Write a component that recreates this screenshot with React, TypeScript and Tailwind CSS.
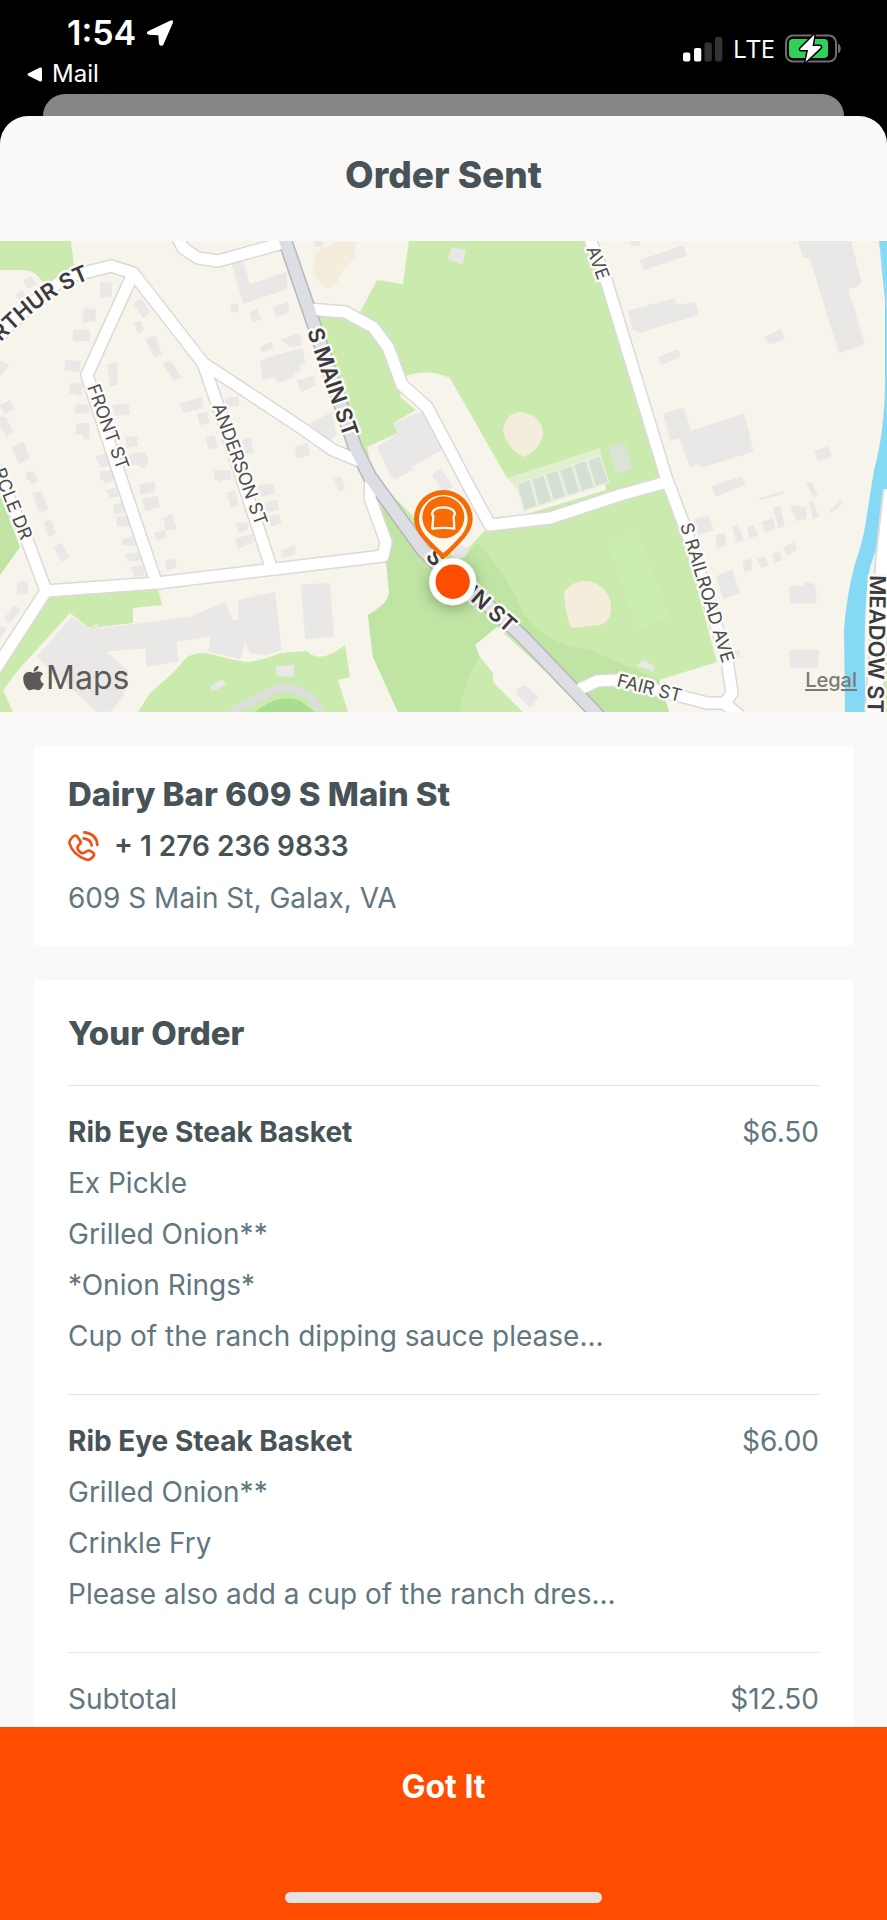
import React from "react";
import { FaApple } from "react-icons/fa";

type OrderItem = { name: string; price: string; notes: string[] };

const items: OrderItem[] = [
  {
    name: "Rib Eye Steak Basket",
    price: "$6.50",
    notes: [
      "Ex Pickle",
      "Grilled Onion**",
      "*Onion Rings*",
      "Cup of the ranch dipping sauce please...",
    ],
  },
  {
    name: "Rib Eye Steak Basket",
    price: "$6.00",
    notes: ["Grilled Onion**", "Crinkle Fry", "Please also add a cup of the ranch dres..."],
  },
];

function StatusBar() {
  return (
    <div className="flex h-[94px] items-start justify-between bg-black pl-[27px] pr-[45px] text-white">
      <div>
        <div className="flex h-[52px] items-end gap-[10px] pl-10">
          <span className="text-[34px] leading-[38px] font-semibold">1:54</span>
          <svg className="mb-[5px] h-7 w-7" viewBox="440 57 84 84" aria-hidden="true">
            <path
              d="M446 94 L512 62 Q524 58 520 70 L492 134 Q484 142 479 132 L477 106 L449 104 Q438 100 446 94Z"
              fill="#fff"
            />
          </svg>
        </div>
        <a href="#mail" className="mt-[6px] flex h-8 items-center gap-[10px] text-2xl">
          <svg className="h-[15px] w-[15px]" viewBox="0 0 15 15" aria-hidden="true">
            <path d="M1 6.5 L13 .6 Q15 0 15 2 V13 Q15 15 13 14.4 L1 8.5 Q0 7.5 1 6.5Z" fill="#fff" />
          </svg>
          Mail
        </a>
      </div>
      <div className="mt-[33px] flex h-[31px] items-center gap-[10px]">
        <svg className="h-[26px] w-10" viewBox="0 0 40 26" aria-hidden="true">
          <rect x="0" y="16.500" width="7.300" height="9" rx="2" fill="#fff" />
          <rect x="11" y="12" width="7.300" height="13.500" rx="2" fill="#fff" />
          <rect x="21.500" y="6.500" width="7.300" height="19" rx="2" fill="#333" />
          <rect x="32" y="1" width="7.300" height="24.500" rx="2" fill="#333" />
        </svg>
        <span className="font-['Open_Sans',sans-serif] text-[26px] leading-[31px]">LTE</span>
        <svg className="h-[29px] w-[57px]" viewBox="0 0 57 29" aria-hidden="true">
          <rect x="1" y="1.500" width="50" height="26" rx="7" fill="none" stroke="#6f6f71" strokeWidth="2" />
          <path d="M53.500 10 Q57 14.500 53.500 19Z" fill="#6f6f71" stroke="#6f6f71" />
          <rect x="4" y="5" width="39" height="19" rx="4" fill="#30d158" />
          <path
            d="M29.500 .5 L15.500 14.500 Q14.500 16 16.500 16 L23 16 L20.500 28 L35.500 13.800 Q36.500 12 34.500 12 L27.500 12Z"
            fill="#fff"
            stroke="#000"
            strokeWidth="3"
            paintOrder="stroke"
            strokeLinejoin="round"
          />
        </svg>
      </div>
    </div>
  );
}

const ROADS = [
  "M-20 362 L0 336 Q45 287 72 276 L111 266 L133 273 L203 363 L300 427 L333 450 L362 462",
  "M132 276 L87 375 L118 470 L156 582",
  "M203 363 L220 412 L271 567",
  "M177 236 L183 248 L198 258 L218 261 L283 243",
  "M46 591 L157 583 L300 566 L383 556 L386 542 L370 498 L371 475",
  "M-4 468 L27 540 L46 591 L0 662 L-6 671",
  "M308 309 L345 312 L373 327 L388 347 L402 385 L427 407 L443 437 L467 483 L490 525 L550 518 L620 495 L667 482",
  "M588 234 L607 283 L666 477 L687 533 L727 660 L732 693 L725 703",
  "M578 690 L597 681 L617 680 L684 697 L707 703 L724 703 L740 716",
];

function Roads({ color, width }: { color: string; width: number }) {
  return (
    <g fill="none" stroke={color} strokeWidth={width} strokeLinejoin="round" strokeLinecap="butt">
      {ROADS.map((d) => (
        <path key={d} d={d} />
      ))}
    </g>
  );
}

const MAIN_ST = "M282 232 L310 313 L355 447 L370 477 L423 550 L443 570 L490 607 L523 637 L592 709 L600 718";

function Buildings() {
  return (
    <g fill="#eae8e6">
      <g transform="translate(0 230) scale(.33333)">
        <path d="M300 157h35v45h-35zM252 234l36 4-2 35-38 5zM220 300h50v34h-52zM195 390l46 2v34l-48-4zM210 458l38 4-4 36-36-8zM320 405l32-10v72h-22zM400 220l22-15 30 40-24 20zM400 278l22-6 10 30-18 10zM436 328l30-12 20 55-24 12zM487 402l24-12 34 50-22 14zM228 522l38 2v28l-40-2zM228 580h40v48h-20v-14h-22zM336 526l50-6 4 32-44 6zM376 622l34-4 4 30-32 6zM286 678l40-10 4 40-30 4zM388 672l50-6 8 34-16 16-14-10-30-2zM300 722h40v28h-40zM535 522l70-22 6 34-56 14zM590 552l30-8 10 36-30 6zM674 505l40-6 4 28-40 4zM614 622l30-6 10 36-28 6zM726 630l26-8 10 48-26 2zM642 722h50v28h-50zM693 95h38l18 68 110-38 4 52-134 45zM688 226l24-8 6 24-22 6zM748 246l24-10 12 32-28 10zM820 232l44-18 4 34-40 12zM780 350l34-14 6 18-34 14zM842 328l58-18v38l-34 2zM780 395l20-12 100-28v70l-20 4-4 16-40 12-12-16-36 8zM0 390l28 15-28 36zM0 525l30-14 12 26-30 16zM0 560h18l22 46-20 14-20-30zM36 652l34-18 20 52-34 16zM76 730l24-8 12 28H80zM70 150l24-12 14 24-24 14zM46 195l20-14 14 20-22 14z" />
      </g>
      <g transform="translate(290 230) scale(.33333)">
        <path d="M486 52l42 8-10 44-46-18zM0 322l28-12 8 34-36 8zM0 366l38-10 8 44-46 20zM20 452l52-16 6 30-44 20zM14 650l40-10 8 34-42 12zM60 580l66-34 14 70-30 20zM260 650l65-40-15-30 75-32h25l55 107-160 90zM426 732l26-14 16 32h-34zM70 34h28v16H72zM130 745l25-5v10z" />
      </g>
      <g transform="translate(587 230) scale(.33333)">
        <path d="M128 34h30v14h-24zM158 90l132-45 10 32-130 43zM122 242l140-38 8 20 56-8 10 38-176 54-22-8zM213 380l62-22 4 22-54 25zM532 322l50-26 12 30-46 18zM632 32h160l30 118q2 14-12 20l-26 8 50 165-78 27-88-285-20-2zM228 552l62-20 22 70 160-52 28 115-156 48-8-10-26 8-34-86-26 8zM682 662l42-14 10 30-42 18zM430 748l36-8v10z" />
        <path d="M65 650l50-10 20 78-50 14z" fill="#dbe3d8" />
      </g>
      <g transform="translate(0 470) scale(.33333)">
        <path d="M215 440l55 35 20-15 10 15 270-35 105-45 25 55h15v-60l110-25 20 175-45 15-50-5-15-35-13 53-97-23 7-45-102 15 5 60-95 15-5-55-115 10 65 60-15 75-40 45h-40L110 560zM76 12l24-10 14 32-20 10zM98 72l26-10 22 56-28 12zM130 156l24-8 14 44-22 10zM160 230l24-12 24 44-24 14zM52 336l30-4 2 42-34-2zM12 444l32-38 20 12-34 42zM0 465l20 10-20 30zM300 8l34-8 6 34-26 8zM316 62l34-12 8 28-26 6zM338 106l36-12 6 34-36 6zM350 140l36-4 4 30-40 6zM366 206l44-10v32l-44-4zM376 252l46-6v26l-40 2zM394 290l36-6 4 30-30 8zM418 44l46-10 2 30-44 10zM426 84l46-6 8 34-44 12zM490 146l26-16 14 46-32 6zM462 188l34-10 4 24-30 10zM494 272l32-8 4 28-28 12zM640 0h50l6 20-40 15zM680 68l24-8 12 42-22 14zM770 48l50-10 4 34-40 8zM786 100l46-12 4 32-40 6zM804 140l34-8 6 28-30 10zM708 160l34-4 2 24-30 8zM706 206l50-14 6 26-50 18zM842 240l44-14v26l-38 12zM828 590l52-6 2 36h-52zM630 648l38-20 10 16-40 20z" />
      </g>
      <g transform="translate(290 470) scale(.33333)">
        <path d="M32 343l88-4 12 160-86 10zM132 26l22-6 12 36-20 8zM0 235l14-8v26H0zM428 14l26-16 36 54-30 14zM300 10l50-20 25 6-58 32zM680 656l24-10 44 36-28 32-40-40zM490 240l24-14 24 10-14 26-30 2zM0 585h12v26H0z" />
        <g fill="#d3e1d3" stroke="#e9eee0" strokeWidth="5">
          <path d="M680 42l40-14 22 80-40 14zM724 27l38-13 24 80-40 14zM766 12l38-13 24 80-38 14zM808-2l38-12 24 80-38 12zM850-16l38-13 26 80-40 14zM892-30l38-13 26 80-40 14z" />
        </g>
      </g>
      <g transform="translate(587 470) scale(.33333)">
        <path d="M374 48l90-28 12 24-90 36zM516 84l70-20 4 8-72 18zM658 40l14-6 20 42-14 6zM320 146l46-10 14 46-46 12zM386 194l26-4 8 36-30 10zM436 168l18-6 16 48-22 6zM480 172l20-8 14 32-26 10zM522 156l36-12 8 34-32 8zM558 112l20-4 16 62-20 4zM610 106l50 6-4 36-28 6zM664 98l14-6 18 48-16 8zM728 122l34-32 8 8-36 32zM466 274l26-10 4 36-24 6zM510 266l24-8 10 28-22 8zM554 252l24-10 8 28-22 8zM590 232l32-16 8 24-30 18zM388 318l48-20 24 72-52 18zM608 348h40l6-10q34-2 34 20v42h-80zM608 540h90l-8 54h-82zM148 588l20-18 34 18-2 18-20-8zM440 545l20-4-2 20-16 6z" />
      </g>
    </g>
  );
}

function MapLabels() {
  return (
    <g
      className="font-normal"
      fontSize="18"
      fill="#4c4b50"
      stroke="#fbfaf5"
      strokeWidth="5"
      strokeLinejoin="round"
      paintOrder="stroke"
    >
      <defs>
        <path id="arthur" d="M-60 405 L-8 352 Q40 298 90 279" />
        <path id="main-south" d="M414 543 Q437 575 472 602 L508 634" />
      </defs>
      <text transform="translate(87 387) rotate(70)">FRONT ST</text>
      <text transform="translate(212 406) rotate(70)">ANDERSON ST</text>
      <text transform="translate(21 541) rotate(68)" textAnchor="end">
        RCLE DR
      </text>
      <text transform="translate(680 525) rotate(73)">S RAILROAD AVE</text>
      <text transform="translate(598 281) rotate(70)" textAnchor="end">
        AVE
      </text>
      <text transform="translate(616 686) rotate(14)">FAIR ST</text>
      <g className="font-semibold" fontSize="22" fill="#3b3a3e">
        <text textAnchor="end">
          <textPath href="#arthur" startOffset="100%">
            ARTHUR ST
          </textPath>
        </text>
        <text transform="translate(307 331) rotate(71)">S MAIN ST</text>
        <text textAnchor="end">
          <textPath href="#main-south" startOffset="100%">
            S MAIN ST
          </textPath>
        </text>
        <text transform="translate(870 575) rotate(91)">MEADOW ST</text>
      </g>
    </g>
  );
}

function StoreMap() {
  return (
    <section className="relative" aria-label="Store location">
      <svg className="block h-auto w-full" viewBox="0 241 887 471" role="img" aria-label="Map of S Main St">
        <defs>
          <filter id="soft" x="-50%" y="-50%" width="200%" height="200%">
            <feDropShadow dx="0" dy="3" stdDeviation="7" floodColor="#000" floodOpacity=".3" />
          </filter>
        </defs>
        <rect x="0" y="241" width="887" height="471" fill="#f7f4eb" />
        <g fill="#cbebae">
          <path d="M0 241H71L74 265L60 282H43Q35 271 26 270H0Z" />
          <path d="M409 241H590L667 477L717 662L659 680L669 712H398L373 657L368 615L389 600V580L386 560L372 500L318 315L345 318L360 312L377 280L403 284Z" />
          <path d="M48 597L158 588L162 605L133 608V623L100 627L88 627L70 613L20 668L3 690L13 712H0V662Z" />
          <path d="M138 712L150 693L173 673L187 657Q200 650 215 655T247 662Q265 660 280 653L307 651Q320 665 345 645L350 677L338 680L348 712Z" />
          <path d="M880 640L887 600V712H878Z" />
        </g>
        <g fill="#bfe4a3">
          <path d="M0 493L20 547L0 575Z" />
          <path d="M373 500L386 560L389 593Q385 608 368 615L373 657L398 712H460Q463 680 480 657L500 625L450 568Z" />
          <path d="M477 543Q505 570 523 613Q545 645 590 650L659 680L669 712H590L470 590L455 568Z" />
          <path d="M255 712Q280 692 300 701L315 712Z" fill="#a9dd8f" />
        </g>
        <path d="M230 713Q262 696 275 690T310 696L322 713" fill="none" stroke="#dbdedb" strokeWidth="8" />
        <g fill="#f7f4eb">
          <path d="M405 376Q430 368 450 378L507 478L600 448L606 490L530 513L490 525L457 560L373 476L367 447L398 433L393 423L416 410L400 397Z" />
          <path d="M497 627L475 645L480 657L493 673V682L523 712H590Z" />
        </g>
        <path d="M507 478L600 446L640 440L660 478L610 497L606 468L520 492Z" fill="#cbebae" opacity=".5" />
        <path d="M607 540L637 531L669 617L637 630Z" fill="#caeeb1" />
        <g fill="#f4eddb">
          <path d="M315 252L338 242H356L355 257L343 270L337 283L326 289L313 274Z" />
          <path d="M503 430Q505 413 521 412Q542 415 543 434Q540 450 524 457Q506 448 503 430Z" />
          <path d="M564 592Q575 578 592 582Q611 590 611 607Q612 620 600 625L572 628Q566 620 564 592Z" />
        </g>
        <path
          d="M879 241L885 273L887 310V490Q884 530 870 567Q862 610 866 712H845L844 630Q846 600 854 567Q860 550 864 533L874 470Q885 430 885 380V300Z"
          fill="#86d9f5"
        />
        <path d="M879 241H887V310L885 273Z" fill="#86d9f5" />
        <Buildings />
        <path d="M892 490L884 560L873 720" fill="none" stroke="#dddcdb" strokeWidth="19" />
        <path d="M892 490L884 560L873 720" fill="none" stroke="#fff" strokeWidth="15" />
        <Roads color="#dcdad9" width={14} />
        <path d={MAIN_ST} fill="none" stroke="#b6b7bb" strokeWidth="15" />
        <Roads color="#ffffff" width={11} />
        <path d={MAIN_ST} fill="none" stroke="#dcdee4" strokeWidth="12" />
        <MapLabels />
        <g filter="url(#soft)">
          <circle cx="452.700" cy="581.700" r="23.500" fill="#fff" />
        </g>
        <circle cx="452.700" cy="581.700" r="17.200" fill="#ff4d00" />
        <g transform="translate(290 470) scale(.33333)">
          <path
            d="M460 268Q442 254 398 206Q372 176 372 148A88 88 0 0 1 548 148Q548 176 522 206Q478 254 460 268Z"
            fill="#f56b05"
          />
          <path
            d="M460 249Q442 236 406 196Q387 172 387 148A73 73 0 0 1 533 148Q533 172 514 196Q478 236 460 249Z"
            fill="#fff8ee"
          />
          <circle cx="460" cy="142" r="63" fill="#f56b05" />
          <path
            d="M430 139Q424 132 429 124Q436 113 460 112Q484 113 492 124Q497 132 491 139L493 176Q460 171 427 176Z"
            fill="none"
            stroke="#fff8ee"
            strokeWidth="7"
            strokeLinejoin="round"
          />
        </g>
      </svg>
      <div className="absolute bottom-[14px] left-[21px] flex items-center text-[32px] leading-10 text-[#5b5a56]">
        <FaApple className="h-7 w-[25px]" aria-hidden="true" />
        <span>Maps</span>
      </div>
      <a
        href="#legal"
        className="absolute right-[30px] bottom-[18px] text-xl leading-7 font-medium text-[#7b7a76] underline decoration-2 underline-offset-2"
      >
        Legal
      </a>
    </section>
  );
}

function PhoneIcon() {
  return (
    <svg className="h-8 w-8" viewBox="206 333 96 96" fill="none" stroke="#ee5113" strokeWidth="8" strokeLinecap="round" strokeLinejoin="round" aria-hidden="true">
      <path d="M221 353Q228 346 234 353L243 366Q246 371 241 376Q230 384 238 395Q248 408 260 398Q265 393 271 395L281 401Q287 406 282 412Q272 424 262 422Q220 408 210 372Q210 364 221 353Z" />
      <path d="M255 340Q292 344 294 378M253 358Q275 361 277 379" />
    </svg>
  );
}

export default function App() {
  return (
    <div className="flex min-h-screen flex-col bg-black font-['Inter','Liberation_Sans',sans-serif] text-[28px] leading-[52px] text-[#627680]">
      <StatusBar />
      <div className="mx-[43px] h-[22px] rounded-t-[22px] bg-[#868686]" />
      <div className="flex grow flex-col rounded-t-[28px] bg-[#faf9f7]">
        <header className="flex h-[125px] items-center justify-center pb-2">
          <h1 className="text-[37px] font-extrabold text-[#475357]">Order Sent</h1>
        </header>
        <StoreMap />
        <main className="flex grow flex-col gap-[34px] px-[34px] pt-[34px]">
          <section className="bg-white px-[34px] py-[22px]">
            <h2 className="text-[33px] font-extrabold text-[#475357]">Dairy Bar 609 S Main St</h2>
            <a href="tel:+12762369833" className="flex items-center gap-[14px] font-semibold text-[#475357]">
              <PhoneIcon />
              + 1 276 236 9833
            </a>
            <p>609 S Main St, Galax, VA</p>
          </section>
          <section className="grow bg-white px-[34px]">
            <h2 className="flex h-[105px] items-center text-[33px] font-extrabold text-[#475357]">Your Order</h2>
            {items.map((item) => (
              <article key={item.price} className="border-t border-[#e3e5e5] pt-5 pb-8">
                <div className="flex justify-between">
                  <h3 className="font-bold text-[#475357]">{item.name}</h3>
                  <span>{item.price}</span>
                </div>
                {item.notes.map((note) => (
                  <p key={note} className="leading-[51px]">
                    {note}
                  </p>
                ))}
              </article>
            ))}
            <div className="flex justify-between border-t border-[#e3e5e5] pt-5">
              <span>Subtotal</span>
              <span>$12.50</span>
            </div>
          </section>
        </main>
      </div>
      <footer className="flex h-[193px] flex-col items-center justify-between bg-[#ff4d00] pb-[17px]">
        <button type="button" className="h-[120px] w-full text-[32px] font-bold text-white">
          Got It
        </button>
        <div className="h-[11px] w-[317px] rounded-full bg-[#e6e2df]" />
      </footer>
    </div>
  );
}
